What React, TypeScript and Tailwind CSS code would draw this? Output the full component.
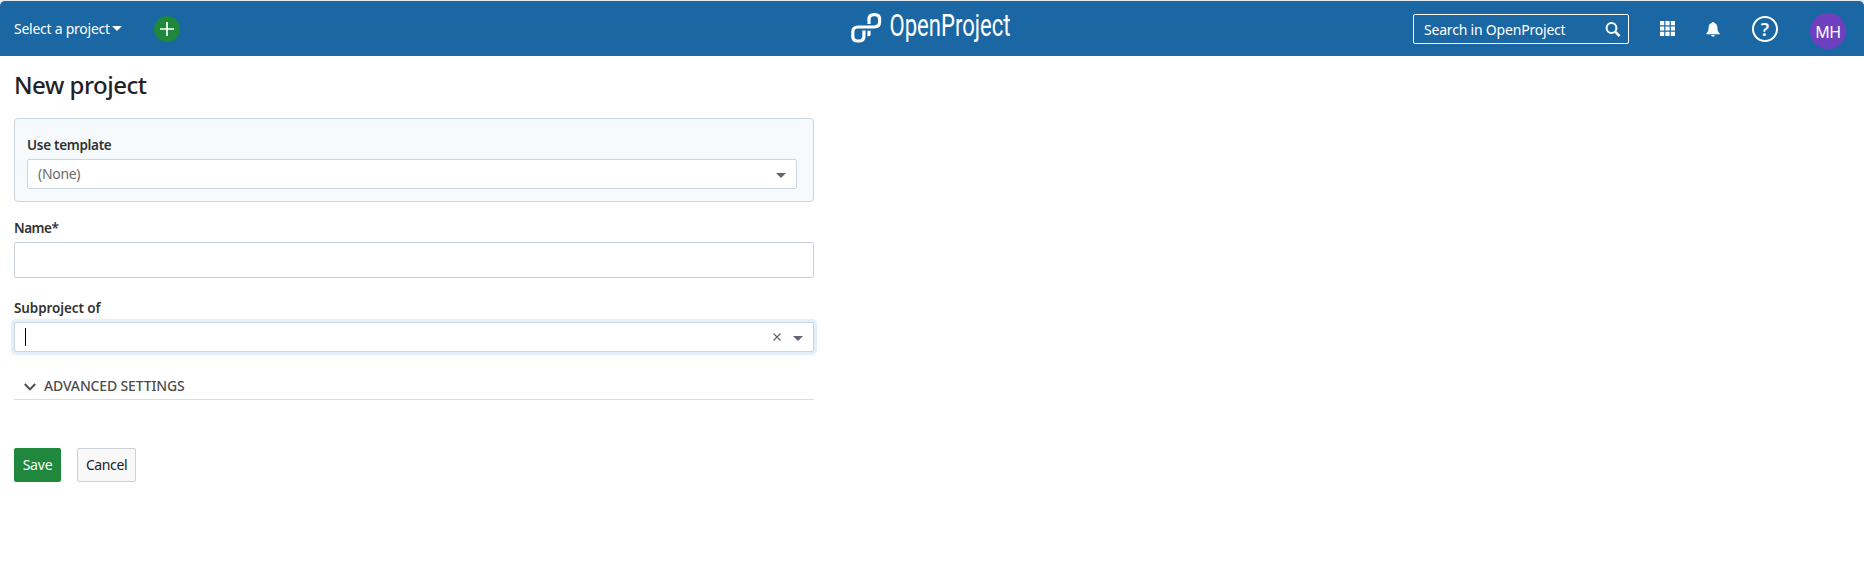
function Logo() {
  return (
    <svg width="164" height="38" viewBox="0 0 164 38" className="block overflow-visible" role="img" aria-label="OpenProject">
      <path
        d="M19 16V11.5Q19 6.700 23.900 6.700H24.700Q29.600 6.700 29.600 11.500V13.600Q29.600 19 24.400 19H8Q2.800 19 2.800 24V28.300Q2.800 33 7.600 33H9Q13.900 33 13.900 28.300V22.500"
        fill="none"
        stroke="#fff"
        strokeWidth="3.2"
      />
      <path d="M17.400 22.800h3.200v3.600q0 1.800-1.800 1.800h-1.400z" fill="#fff" />
      <text x="39.5" y="28" fill="#fff" fontFamily="Roboto, sans-serif" fontSize="31" textLength="121" lengthAdjust="spacingAndGlyphs">
        OpenProject
      </text>
    </svg>
  );
}

function Caret({ className }: { className: string }) {
  return (
    <svg width="10" height="5" viewBox="0 0 10 5" className={className}>
      <path d="M0 0h10L5 5z" fill="currentColor" />
    </svg>
  );
}

function Header() {
  return (
    <div className="bg-[#e4ebf0] pt-px">
      <header className="grid h-[55px] grid-cols-[850px_164px_1fr] rounded-t-[5px] bg-[#1a67a3] text-white">
        <div className="flex items-start pl-[14px]">
          <button className="mt-[18px] flex w-[108px] items-center text-[14px] leading-[20px] tracking-[-0.25px]">
            Select a project
            <Caret className="-mt-[1px] ml-[2px]" />
          </button>
          <button className="ml-[32px] mt-[15px] flex size-[26px] items-center justify-center rounded-full bg-[#1f883d]">
            <svg width="16" height="16" viewBox="0 0 16 16">
              <path d="M8 1v14M1 8h14" stroke="#fff" strokeWidth="1.7" />
            </svg>
          </button>
        </div>
        <div className="pt-[7px]">
          <Logo />
        </div>
        <div className="flex items-start pl-[399px]">
          <div className="mt-[13px] flex h-[30px] w-[216px] items-center rounded-[2px] border border-white pl-[10px] pr-[7px]">
            <span className="mt-[2px] flex-1 text-[14px] leading-[20px] tracking-[-0.2px]">Search in OpenProject</span>
            <svg width="16" height="16" viewBox="0 0 16 16" className="mt-px">
              <circle cx="6.5" cy="6" r="4.9" fill="none" stroke="#fff" strokeWidth="2" />
              <path d="M10.1 9.600l4.500 4.500" stroke="#fff" strokeWidth="2.5" />
            </svg>
          </div>
          <svg width="15" height="15" viewBox="0 0 15 15" className="ml-[31px] mt-[20px]" fill="#fff">
            <path d="M0 0h4.2v4.2H0zM5.4 0h4.2v4.2H5.4zM10.8 0H15v4.2h-4.2zM0 5.4h4.2v4.2H0zM5.4 5.4h4.2v4.2H5.4zM10.8 5.4H15v4.2h-4.2zM0 10.8h4.2V15H0zM5.4 10.8h4.2V15H5.4zM10.8 10.8H15V15h-4.2z" />
          </svg>
          <svg width="14" height="15" viewBox="0 0 14 15" className="ml-[31px] mt-[21px]" fill="#fff">
            <path d="M7 0c.8 0 1.2.5 1.2 1.100 2 .5 3.100 2 3.200 4.200.1 3 .5 4.500 2.300 6.200v.8H.3v-.8C2.100 9.800 2.500 8.300 2.600 5.300 2.700 3.100 3.800 1.600 5.800 1.100 5.800.5 6.200 0 7 0zM5.200 13h3.600c-.1 1-.8 1.600-1.800 1.600S5.300 14 5.200 13z" />
          </svg>
          <div className="ml-[32px] mt-[15px] flex size-[26px] items-center justify-center rounded-full border-2 border-white text-[18px] font-semibold leading-none">
            ?
          </div>
          <div className="ml-[32px] mt-[12px] flex size-[36px] items-center justify-center rounded-full bg-[#6e40c0] text-[16px] leading-none tracking-[-0.5px]">
            <span className="mt-[1px]">MH</span>
          </div>
        </div>
      </header>
    </div>
  );
}

export default function App() {
  return (
    <div className="min-h-[569px] bg-white font-['Noto_Sans',sans-serif] text-[14px] leading-[20px] text-[#333]">
      <Header />
      <main className="ml-[14px] w-[800px]">
        <h1 className="pt-[13px] text-[24px] font-medium leading-[32px] tracking-[-0.5px] text-[#1f2328]">New project</h1>

        <section className="mt-[17px] h-[84px] rounded-[4px] border border-[#cbd5e0] bg-[#f6fafd] pl-[12px] pr-[16px] pt-[16px]">
          <div className="text-[13.5px] font-semibold tracking-[-0.3px]">Use template</div>
          <div className="mt-[4px] flex h-[30px] items-center justify-between rounded-[2px] border border-[#cbd5e0] bg-white pl-[10px] pr-[10px]">
            <span className="tracking-[-0.3px] text-[#6b6b6b]">(None)</span>
            <Caret className="mt-[3px] text-[#5f6773]" />
          </div>
        </section>

        <div className="mt-[16px] text-[13.5px] font-semibold tracking-[-0.5px]">Name*</div>
        <div className="mt-[4px] h-[36px] rounded-[2px] border border-[#cbd1d8] bg-white" />

        <div className="mt-[20px] text-[13.5px] font-semibold tracking-[-0.1px]">Subproject of</div>
        <div className="mt-[4px] flex h-[30px] items-center rounded-[2px] border border-[#cbd5e0] bg-white pl-[10px] pr-[10px] ring-[3px] ring-[#e2f0fd]">
          <div className="h-[18px] w-px bg-black" />
          <svg width="8" height="8" viewBox="0 0 8 8" className="ml-auto text-[#5f6773]">
            <path d="M.5.5l7 7M7.500.5l-7 7" stroke="currentColor" strokeWidth="1.2" />
          </svg>
          <Caret className="ml-[12px] mt-[2px] text-[#5f6773]" />
        </div>

        <div className="mt-[19px] flex h-[29px] items-center border-b border-[#dcdcdc] pl-[10px] pt-[2px] font-medium text-[#4d4d4d]">
          <svg width="12" height="8" viewBox="0 0 12 8" className="mt-px">
            <path d="M.8 1L6 6.400 11.200 1" fill="none" stroke="#4d4d4d" strokeWidth="2" />
          </svg>
          <span className="ml-[8px] tracking-[-0.15px]">ADVANCED SETTINGS</span>
        </div>

        <div className="mt-[48px] flex gap-[16px]">
          <button className="h-[34px] w-[47px] rounded-[2px] bg-[#1f883d] tracking-[-0.2px] text-white">Save</button>
          <button className="h-[34px] w-[59px] rounded-[2px] border border-[#cbd1d8] bg-[#f8f8f8] tracking-[-0.4px] text-[#222]">Cancel</button>
        </div>
      </main>
    </div>
  );
}
